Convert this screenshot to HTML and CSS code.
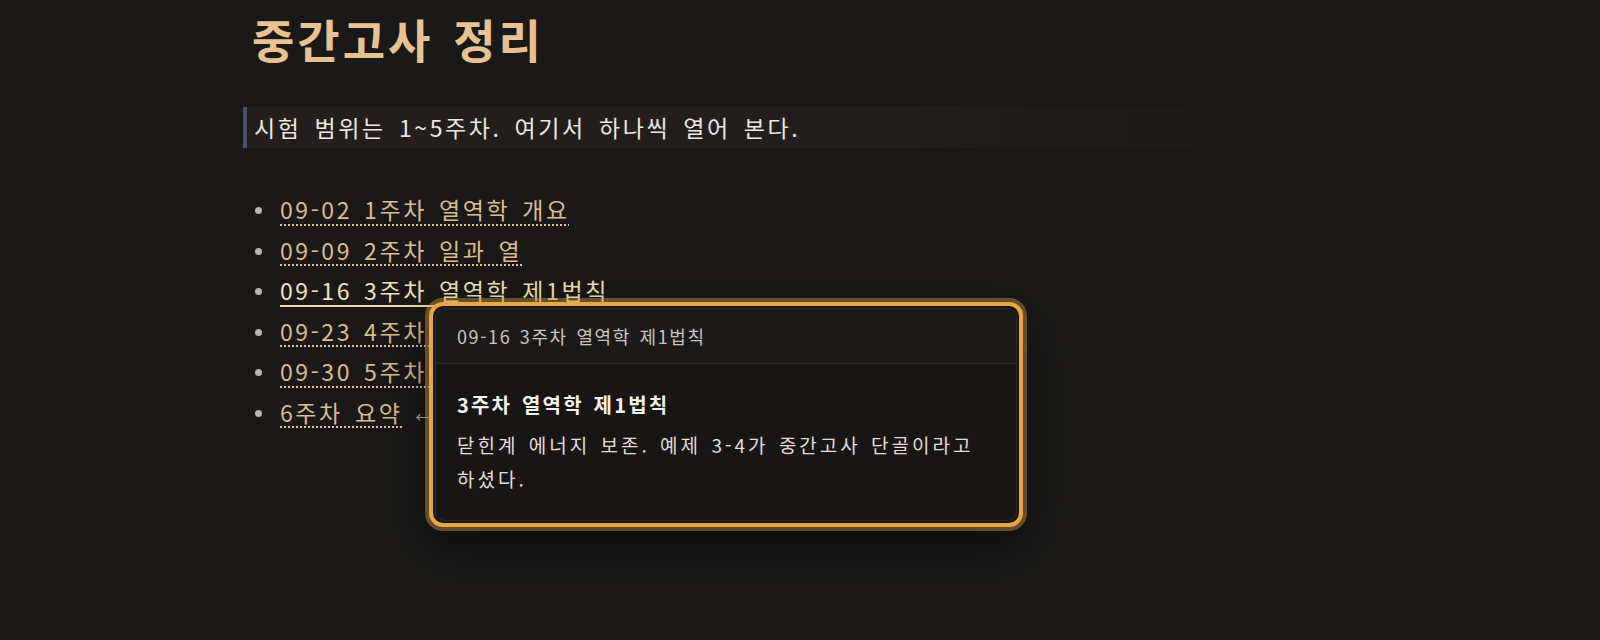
FILE: index.html
```html
<!DOCTYPE html>
<html lang="ko">
<head>
<meta charset="utf-8">
<title>중간고사 정리</title>
<link rel="stylesheet" href="styles.css">
</head>
<body>
<main class="page">
  <h1 class="title">중간고사 정리</h1>
  <blockquote class="note">시험 범위는 1~5주차. 여기서 하나씩 열어 본다.</blockquote>
  <ul class="links">
    <li><a class="link">09-02 1주차 열역학 개요</a></li>
    <li><a class="link">09-09 2주차 일과 열</a></li>
    <li><a class="link link-hover">09-16 3주차 열역학 제1법칙</a></li>
    <li><a class="link">09-23 4주차 엔트로피</a></li>
    <li><a class="link">09-30 5주차 제2법칙</a></li>
    <li><a class="link">6주차 요약</a><span class="back">←</span></li>
  </ul>
  <div class="popup">
    <div class="card">
      <div class="card-head">09-16 3주차 열역학 제1법칙</div>
      <div class="card-body">
        <div class="card-title">3주차 열역학 제1법칙</div>
        <p class="card-text">닫힌계 에너지 보존. 예제 3-4가 중간고사 단골이라고 하셨다.</p>
      </div>
    </div>
  </div>
</main>
</body>
</html>
```
FILE: styles.css
```css
html, body {
  margin: 0;
  padding: 0;
  background: #1a1918;
  height: 100%;
}
body {
  font-family: "Noto Sans CJK KR", "Noto Sans", sans-serif;
  color: #e6e2dc;
  overflow: hidden;
}
.page {
  position: relative;
  margin: 0 243px;
  padding-top: 8px;
}
.title {
  margin: 0 0 0 9px;
  font-size: 46px;
  line-height: 60px;
  font-weight: 700;
  color: #e8c391;
  letter-spacing: 3px;
  word-spacing: 4px;
}
.note {
  margin: 39px 0 0 0;
  border-left: 4px solid #4a4f6b;
  padding: 0 0 0 7px;
  height: 41px;
  line-height: 41px;
  font-size: 23px;
  color: #ece8e2;
  letter-spacing: 2.6px;
  word-spacing: 4px;
  background: linear-gradient(to right, #241f1c 0%, #221e1b 55%, rgba(26,25,24,0) 100%);
}
.links {
  list-style: none;
  margin: 41px 0 0 0;
  padding: 0 0 0 11px;
}
.links li {
  position: relative;
  padding-left: 26px;
  height: 40.6px;
  line-height: 40.6px;
  font-size: 23px;
  letter-spacing: 2.6px;
  word-spacing: 3px;
  white-space: nowrap;
}
.links li::before {
  content: "";
  position: absolute;
  left: 1px;
  top: 18px;
  width: 7px;
  height: 7px;
  border-radius: 50%;
  background: #b9b5b0;
}
.link {
  color: #dcbc8c;
  text-decoration: underline dotted #e2c48f;
  text-decoration-thickness: 2px;
  text-underline-offset: 5px;
}
.link-hover {
  color: #f3e2b4;
  text-decoration: underline solid #f0dfaa;
  text-decoration-thickness: 2px;
}
.back {
  margin-left: 13px;
  color: #c4bfb8;
  font-size: 14px;
  letter-spacing: 0;
}
.popup {
  position: absolute;
  left: 186px;
  top: 302px;
  width: 594px;
  height: 225px;
  box-sizing: border-box;
  border: 4px solid #e9a645;
  border-radius: 14px;
  padding: 2px;
  background: #171615;
  box-shadow: 0 0 0 4px rgba(200, 150, 70, 0.45), 0 18px 50px rgba(0, 0, 0, 0.55);
}
.card {
  box-sizing: border-box;
  height: 100%;
  border: 1px solid #2c2a28;
  border-radius: 10px;
  overflow: hidden;
}
.card-head {
  height: 54px;
  line-height: 54px;
  padding-left: 21px;
  font-size: 18px;
  color: #cbc4ba;
  letter-spacing: 1.6px;
  word-spacing: 2px;
  background: #1b1a19;
  border-bottom: 1px solid #2c2a28;
}
.card-body {
  padding: 25px 21px 0 21px;
}
.card-title {
  font-size: 20px;
  line-height: 32px;
  font-weight: 700;
  color: #f4f0ea;
  letter-spacing: 2.2px;
  word-spacing: 2px;
}
.card-text {
  margin: 7px 0 0 0;
  font-size: 19px;
  line-height: 34px;
  color: #e2ddd6;
  width: 545px;
  letter-spacing: 3px;
  word-spacing: 2px;
  word-break: keep-all;
}
```
